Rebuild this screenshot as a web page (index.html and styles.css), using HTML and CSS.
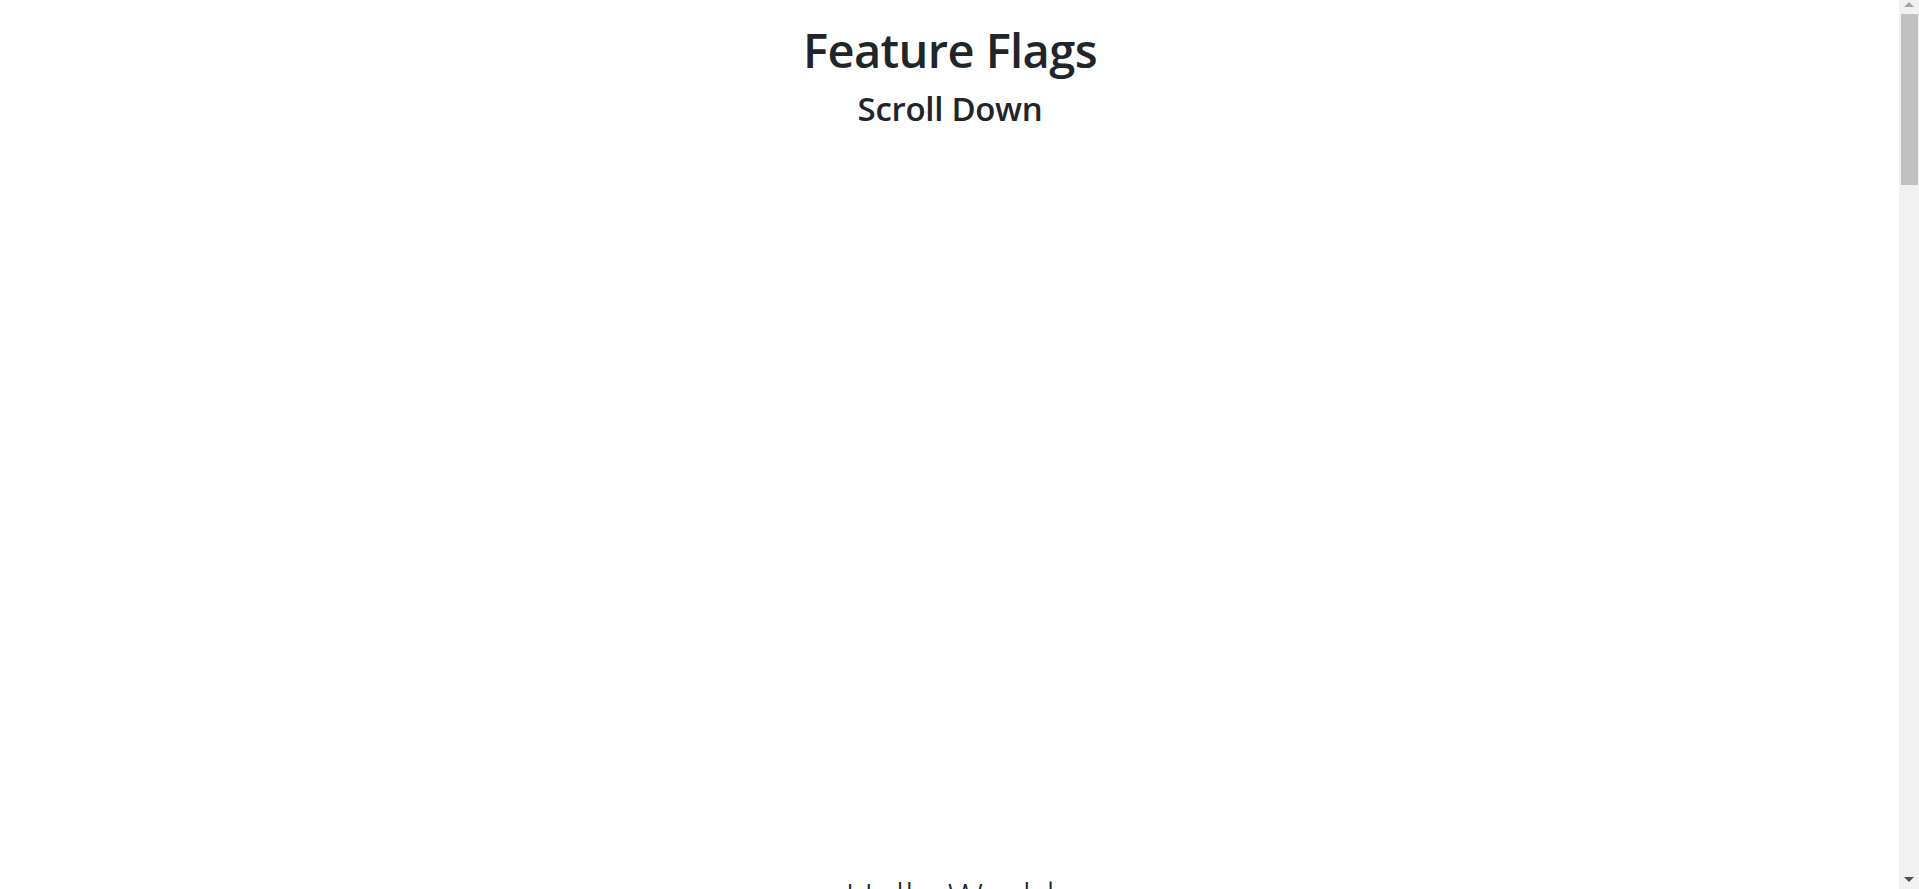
FILE: index.html
```html
<!DOCTYPE html>
<html lang="en">
<head>
<meta charset="utf-8">
<title>Feature Flags</title>
<link rel="stylesheet" href="styles.css">
</head>
<body>
<main class="page">
  <header class="intro">
    <h1 class="title">Feature Flags</h1>
    <h2 class="subtitle">Scroll Down</h2>
  </header>
  <section class="spacer"></section>
  <section class="feature">
    <p class="hello">Hello World</p>
  </section>
</main>
<div class="scrollbar" aria-hidden="true">
  <span class="arrow arrow-up"></span>
  <span class="thumb"></span>
  <span class="track-fill"></span>
  <span class="arrow arrow-down"></span>
</div>
</body>
</html>
```

FILE: styles.css
```css
html, body {
  margin: 0;
  padding: 0;
  background: #ffffff;
}
body {
  font-family: "Open Sans", "Noto Sans", sans-serif;
  color: #212529;
  padding-right: 19px;
}
.page {
  display: flex;
  flex-direction: column;
  align-items: center;
  text-align: center;
}
.intro {
  display: flex;
  flex-direction: column;
  align-items: center;
  padding-top: 22px;
}
.title {
  margin: 0;
  font-size: 47px;
  font-weight: 600;
  line-height: 1.2;
  letter-spacing: -0.6px;
}
.subtitle {
  margin: 11px 0 0;
  font-size: 33px;
  font-weight: 600;
  line-height: 1.2;
  letter-spacing: -0.3px;
}
.spacer {
  height: 745px;
}
.feature {
  padding-bottom: 200px;
}
.hello {
  margin: 0;
  font-size: 40px;
  font-weight: 300;
  line-height: 1.2;
}
.scrollbar {
  position: fixed;
  top: 0;
  right: 0;
  bottom: 0;
  width: 20px;
  background: #f1f1f1;
  display: flex;
  flex-direction: column;
  align-items: center;
}
.arrow {
  width: 0;
  height: 0;
  border-left: 5px solid transparent;
  border-right: 5px solid transparent;
  flex: none;
}
.arrow-up {
  margin-top: 2px;
  border-bottom: 5px solid #a3a3a3;
}
.arrow-down {
  margin-bottom: 7px;
  border-top: 5px solid #505050;
}
.thumb {
  margin-top: 7px;
  width: 17px;
  height: 171px;
  background: #c1c1c1;
  flex: none;
}
.track-fill {
  flex: 1;
}
```
